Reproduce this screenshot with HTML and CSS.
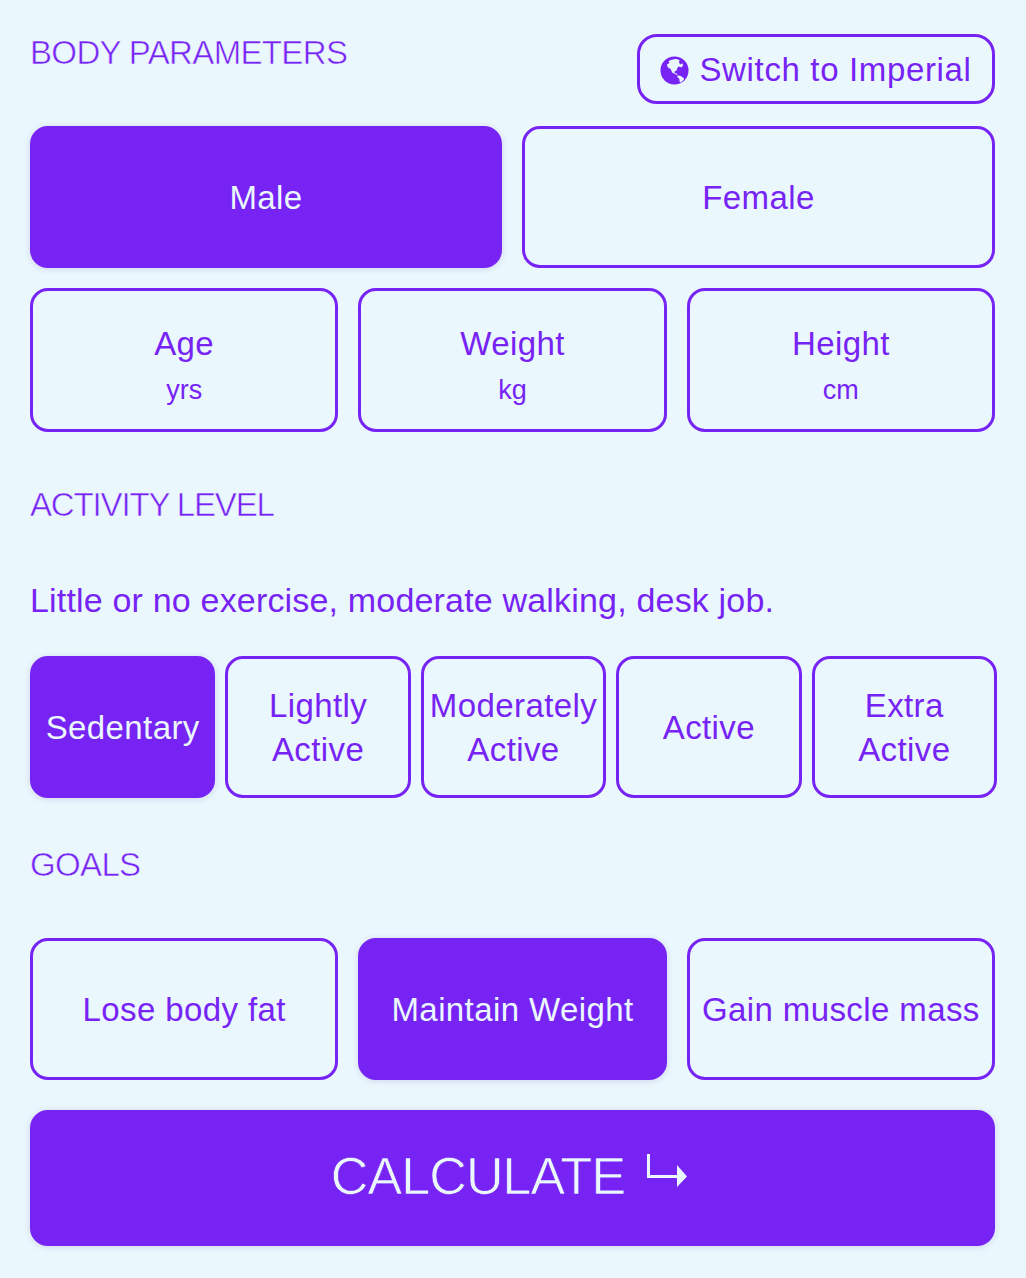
FILE: index.html
```html
<!DOCTYPE html>
<html lang="en">
<head>
<meta charset="utf-8">
<title>Body parameters</title>
<link rel="stylesheet" href="styles.css">
</head>
<body>
<main class="page">
  <section class="head-row">
    <h2 class="heading heading-top">BODY PARAMETERS</h2>
    <button class="btn switch">
      <svg class="globe" viewBox="0 0 30 30" aria-hidden="true">
        <circle cx="15" cy="15" r="14.500" fill="#7723f4"/>
        <path fill="#eaf7fd" d="M9 5.500c2-1.500 5-2.500 8-2.300l3.500 1.300-1 1.800 1.500 2.500 2-1.200 1 2-2 2.300-2.500-1-1.500 1.200-.8 2.900-2.200 1 .3 1.800 2.700.6-.3 1.300-2.200-1.200-3-1.400-1.300-3.400-3.200-2-.8-2.900 2.500-1.600z"/>
        <path fill="#eaf7fd" d="m18 20.200 3 .3 3.800 2.500-.2 1.500-3 2.800-1.200-.3-.4-3.200-2.200-2.400z"/>
      </svg>
      <span>Switch to Imperial</span>
    </button>
  </section>

  <section class="row two">
    <button class="btn tall on">Male</button>
    <button class="btn tall">Female</button>
  </section>

  <section class="row three params">
    <button class="btn param"><span>Age</span><small>yrs</small></button>
    <button class="btn param"><span>Weight</span><small>kg</small></button>
    <button class="btn param"><span>Height</span><small>cm</small></button>
  </section>

  <h2 class="heading heading-activity">ACTIVITY LEVEL</h2>
  <p class="desc">Little or no exercise, moderate walking, desk job.</p>

  <section class="row five">
    <button class="btn tall on">Sedentary</button>
    <button class="btn tall">Lightly<br>Active</button>
    <button class="btn tall tight">Moderately<br>Active</button>
    <button class="btn tall">Active</button>
    <button class="btn tall">Extra<br>Active</button>
  </section>

  <h2 class="heading heading-goals">GOALS</h2>

  <section class="row three goals">
    <button class="btn tall">Lose body fat</button>
    <button class="btn tall on">Maintain Weight</button>
    <button class="btn tall tight">Gain muscle mass</button>
  </section>

  <button class="btn calc on">
    <span class="calc-label">CALCULATE</span>
    <svg class="arrow" viewBox="0 0 40 33" aria-hidden="true">
      <path fill="#eaf7fd" d="M0 0h3v21h27v-10l10 11.500-10 10.500v-9h-30z"/>
    </svg>
  </button>
</main>
</body>
</html>
```
FILE: styles.css
```css
* { box-sizing: border-box; }
html, body { margin: 0; padding: 0; }
body {
  width: 1026px;
  height: 1278px;
  overflow: hidden;
  background: #eaf7fd;
  color: #7723f4;
  font-family: "Liberation Sans", Arial, sans-serif;
}
.page { padding: 34px 31px 0 30px; }
.head-row { display: flex; justify-content: space-between; align-items: flex-start; }
.heading {
  margin: 0;
  font-family: "Liberation Sans", Arial, sans-serif;
  font-size: 33px;
  font-weight: 400;
  line-height: 38px;
  letter-spacing: -0.65px;
  -webkit-text-stroke: 0.55px #eaf7fd;
}
.btn {
  display: block;
  margin: 0;
  padding: 2px 0 0;
  border: 3px solid #7723f4;
  border-radius: 18px;
  background: transparent;
  color: #7723f4;
  font-family: "Liberation Sans", Arial, sans-serif;
  font-size: 33px;
  letter-spacing: 0.4px;
  line-height: 44px;
  text-align: center;
}
.on {
  background: #7723f4;
  color: #eaf7fd;
  box-shadow: 0 1px 6px rgba(90, 60, 160, 0.18);
}
.switch {
  display: flex;
  align-items: center;
  justify-content: center;
  gap: 10px;
  width: 358px;
  height: 70px;
  border-radius: 20px;
  letter-spacing: 0.65px;
}
.globe { width: 29px; height: 29px; flex: none; }
.row { display: grid; width: 965px; }
.two { grid-template-columns: 472px 1fr; gap: 20px; margin-top: 22px; }
.three { grid-template-columns: repeat(3, 1fr); gap: 20px; }
.params { margin-top: 20px; }
.five { grid-template-columns: repeat(5, 185.400px); gap: 10px; width: 968px; }
.tall { height: 142px; }
.tight { white-space: nowrap; }
.param {
  display: flex;
  flex-direction: column;
  align-items: center;
  justify-content: center;
  height: 144px;
  padding-top: 15px;
}
.param small { font-size: 27px; letter-spacing: 0; line-height: 48px; }
.heading-activity { margin-top: 54px; letter-spacing: -1.15px; }
.desc {
  margin: 54px 0 0;
  height: 78px;
  font-size: 34px;
  letter-spacing: 0.18px;
  line-height: 44px;
}
.heading-goals { margin-top: 48px; }
.goals { margin-top: 54px; }
.calc {
  display: flex;
  align-items: center;
  justify-content: center;
  gap: 22px;
  width: 965px;
  height: 136px;
  margin-top: 30px;
  padding: 0 0 4px;
  font-size: 52px;
  letter-spacing: -0.9px;
  line-height: 60px;
}
.calc-label { -webkit-text-stroke: 0.7px #7723f4; }
.arrow { width: 40px; height: 33px; flex: none; margin: -11px 7px 0 0; }
```
